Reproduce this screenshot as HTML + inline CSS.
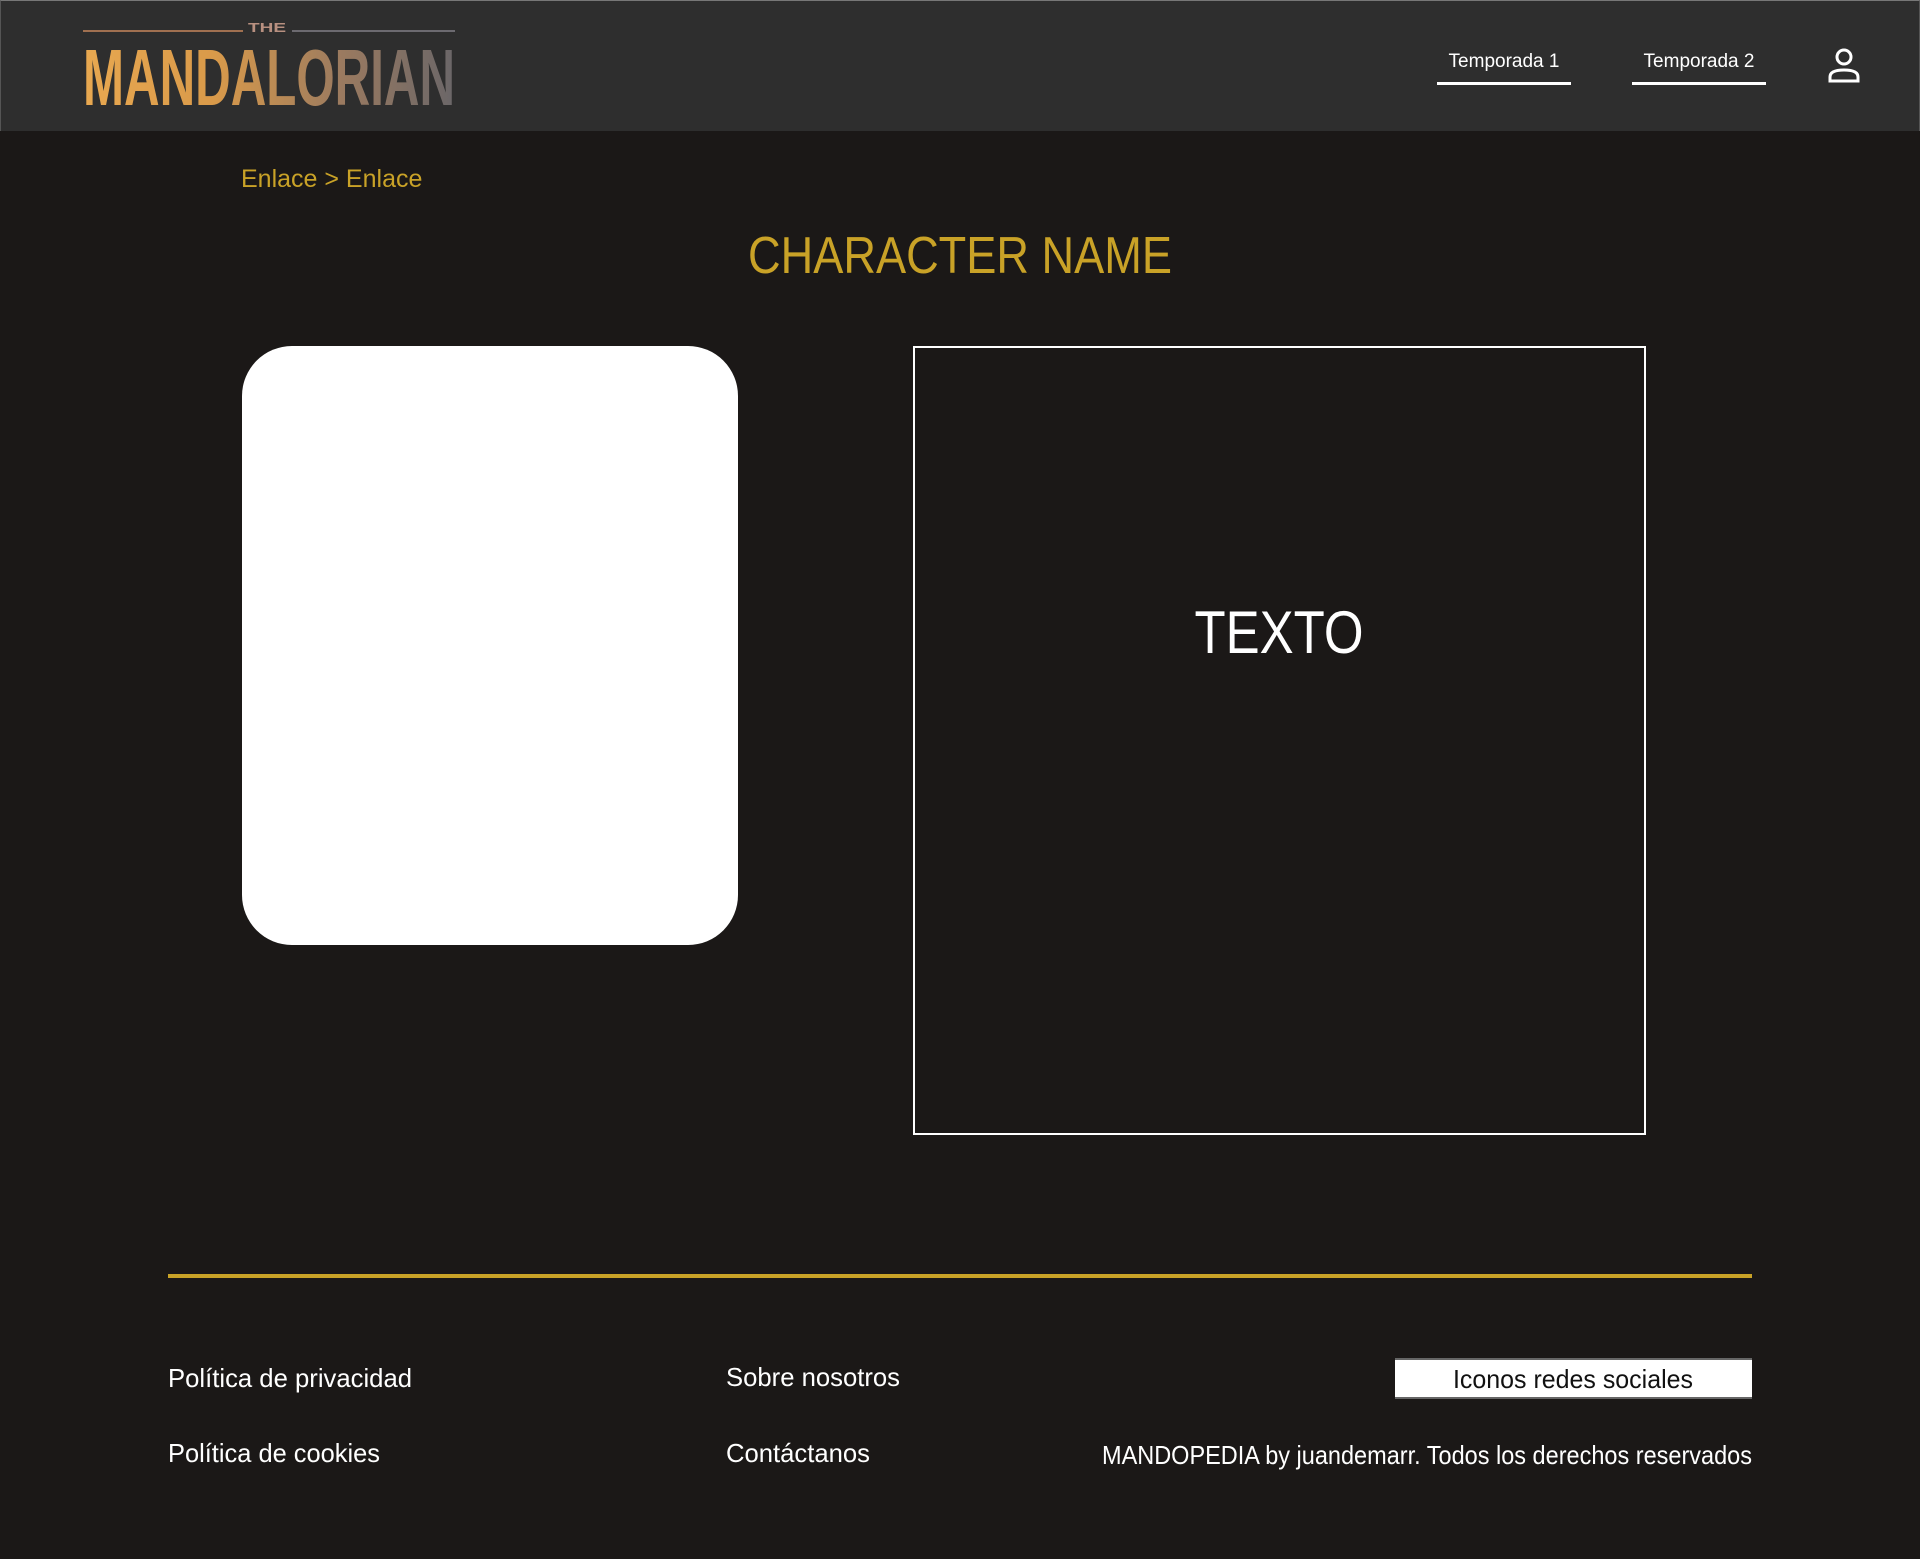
<!DOCTYPE html>
<html><head><meta charset="utf-8">
<style>
*{margin:0;padding:0;box-sizing:border-box}
body{width:1920px;height:1559px;background:#1b1817;font-family:"Liberation Sans",sans-serif;position:relative;overflow:hidden;color:#fff}
.hdr{position:absolute;left:0;top:0;width:1920px;height:131px;background:#2e2e2e;border-top:1px solid #777;border-left:1px solid #555;border-right:1px solid #555}
.abs{position:absolute;white-space:nowrap}
.nav{font-size:19px;color:#fff}
.ul{position:absolute;height:3px;background:#fff}
.gold{color:#c9a227}
</style></head><body>
<div class="hdr"></div>
<svg class="abs" style="left:80px;top:18px" width="380" height="92" viewBox="0 0 380 92">
<defs><linearGradient id="g" x1="0" y1="0" x2="1" y2="0">
<stop offset="0" stop-color="#e8a850"/><stop offset="0.35" stop-color="#d99a4a"/><stop offset="0.7" stop-color="#9a7a60"/><stop offset="1" stop-color="#6a6668"/></linearGradient></defs>
<rect x="3" y="12" width="160" height="2" fill="#a07050"/>
<rect x="212" y="12" width="163" height="2" fill="#6c6a70"/>
<text x="187" y="14" font-size="13" font-weight="bold" fill="#b89080" text-anchor="middle" textLength="38" lengthAdjust="spacingAndGlyphs">THE</text>
<text x="3" y="87" font-size="80" font-weight="bold" fill="url(#g)" textLength="372" lengthAdjust="spacingAndGlyphs">MANDALORIAN</text>
</svg>
<div class="abs nav" style="top:51px;left:1437px;width:134px;text-align:center">Temporada 1</div>
<div class="ul" style="left:1437px;top:82px;width:134px"></div>
<div class="abs nav" style="left:1632px;top:51px;width:134px;text-align:center">Temporada 2</div>
<div class="ul" style="left:1632px;top:82px;width:134px"></div>
<svg class="abs" style="left:1826px;top:46px" width="38" height="40" viewBox="0 0 38 40">
<circle cx="18" cy="11" r="7" fill="none" stroke="#fff" stroke-width="3"/>
<path d="M4 35 L4 31 Q4 24 18 24 Q32 24 32 31 L32 35 Z" fill="none" stroke="#fff" stroke-width="3"/>
</svg>
<div class="abs gold" style="left:241px;top:165px;font-size:25px">Enlace &gt; Enlace</div>
<svg class="abs" style="left:0;top:215px" width="1920" height="70"><text x="960" y="58" font-size="52" fill="#c9a227" text-anchor="middle" textLength="424" lengthAdjust="spacingAndGlyphs">CHARACTER NAME</text></svg>
<div class="abs" style="left:242px;top:346px;width:496px;height:599px;background:#fff;border-radius:50px"></div>
<div class="abs" style="left:913px;top:346px;width:733px;height:789px;border:2px solid #fff"></div>
<svg class="abs" style="left:913px;top:588px" width="733" height="80"><text x="366" y="65" font-size="60" fill="#fff" text-anchor="middle" textLength="169" lengthAdjust="spacingAndGlyphs">TEXTO</text></svg>
<div class="abs" style="left:168px;top:1274px;width:1584px;height:4px;background:#c9a227"></div>
<svg class="abs" style="left:0;top:1339px" width="1920" height="140">
<g font-size="26" fill="#fff">
<text x="168" y="48" textLength="244" lengthAdjust="spacingAndGlyphs">Política de privacidad</text>
<text x="726" y="47" textLength="174" lengthAdjust="spacingAndGlyphs">Sobre nosotros</text>
<text x="168" y="123" textLength="212" lengthAdjust="spacingAndGlyphs">Política de cookies</text>
<text x="726" y="123" textLength="144" lengthAdjust="spacingAndGlyphs">Contáctanos</text>
<text x="1752" y="125" text-anchor="end" textLength="650" lengthAdjust="spacingAndGlyphs">MANDOPEDIA by juandemarr. Todos los derechos reservados</text>
</g></svg>
<div class="abs" style="left:1395px;top:1358px;width:357px;height:41px;background:#fff;border-top:2px solid #666;border-bottom:2px solid #666"></div>
<svg class="abs" style="left:1395px;top:1357px" width="357" height="41"><text x="178" y="31" font-size="26" fill="#111" text-anchor="middle" textLength="240" lengthAdjust="spacingAndGlyphs">Iconos redes sociales</text></svg>
</body></html>
